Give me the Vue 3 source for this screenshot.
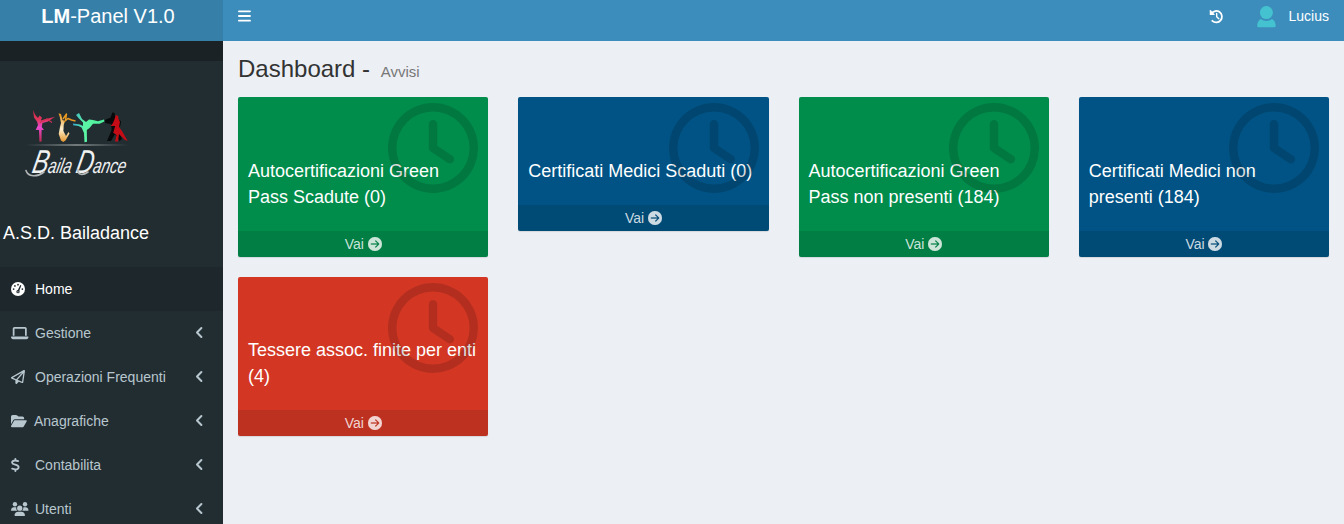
<script setup>
const menu = [
  { label: 'Home', icon: 'gauge', active: true },
  { label: 'Gestione', icon: 'laptop' },
  { label: 'Operazioni Frequenti', icon: 'plane' },
  { label: 'Anagrafiche', icon: 'folder' },
  { label: 'Contabilita', icon: 'dollar' },
  { label: 'Utenti', icon: 'users' }
]
const boxes = [
  { text: 'Autocertificazioni Green Pass Scadute (0)', tone: 'green' },
  { text: 'Certificati Medici Scaduti (0)', tone: 'blue' },
  { text: 'Autocertificazioni Green Pass non presenti (184)', tone: 'green' },
  { text: 'Certificati Medici non presenti (184)', tone: 'blue' },
  { text: 'Tessere assoc. finite per enti (4)', tone: 'red' }
]
</script>

<template>
  <div class="wrapper">
    <header class="header">
      <div class="brand"><span><b>LM</b>-Panel V1.0</span></div>
      <nav class="navbar">
        <svg class="bars" viewBox="0 0 14 14"><path d="M.9 2.3H12M.9 7H12M.9 11.7H12" fill="none" stroke="currentColor" stroke-width="1.8" stroke-linecap="round" /></svg>
        <div class="nav-right">
          <svg class="history" viewBox="0 0 16 16"><path d="M2.6 4.8A6.1 6.1 0 1 1 3.5 12.6" fill="none" stroke="currentColor" stroke-width="1.9" stroke-linecap="round" /><path d="M.8 1.5V5.8Q.8 6.4 1.4 6.4H5.7Q6.4 6.2 5.9 5.5L1.9 1.3Q1.1.7.8 1.5Z" fill="currentColor" /><path d="M8.2 4.7V8.2L10.5 10.4" fill="none" stroke="currentColor" stroke-width="1.5" stroke-linecap="round" stroke-linejoin="round" /></svg>
          <svg class="avatar" viewBox="0 0 20 22"><circle cx="9.4" cy="6.6" r="6.5" /><path d="M3.9 13C6.9 15.5 11.900 15.5 14.9 13C17.200 14.2 18.600 16.5 18.700 19.7Q18.700 21.2 17.100 21.2H1.700Q.2 21.2.2 19.7C.3 16.5 1.700 14.2 3.900 13Z" /></svg>
          <span class="user">Lucius</span>
        </div>
      </nav>
    </header>

    <div class="body">
      <aside class="sidebar">
        <div class="strip"></div>
        <div class="panel">
          <svg class="logo" viewBox="0 0 140 80">
            <defs>
              <linearGradient id="rose" x1="0" y1="0" x2="0" y2="1"><stop offset="0" stop-color="#c72845" /><stop offset=".3" stop-color="#e0355c" /><stop offset=".55" stop-color="#e84bd0" /><stop offset="1" stop-color="#b92c4c" /></linearGradient>
              <linearGradient id="gold" x1="0" y1="0" x2="0" y2="1"><stop offset="0" stop-color="#e38d12" /><stop offset=".55" stop-color="#fff0cf" /><stop offset="1" stop-color="#e5952b" /></linearGradient>
              <linearGradient id="mint" x1="0" y1="0" x2="1" y2="0"><stop offset="0" stop-color="#38a8cf" /><stop offset=".35" stop-color="#5cf5a5" /><stop offset="1" stop-color="#4bf09a" /></linearGradient>
              <linearGradient id="rule" x1="0" y1="0" x2="1" y2="0"><stop offset="0" stop-color="#8d9494" stop-opacity="0" /><stop offset=".5" stop-color="#8d9494" /><stop offset="1" stop-color="#8d9494" stop-opacity="0" /></linearGradient>
            </defs>
            <path fill="url(#rose)" d="M8 1L10.400 6L13 9L14.5 6.500L17 8.5L15.8 11.5L19 10.5L30 7.800L23 12.5L17.5 14L16.7 18L19 21L16.6 21L16.6 32.5L14.400 32.7L14 21L10.7 21L13 16L12 12.500L9 8.500Z" />
            <path fill="none" stroke="#cf3154" stroke-width="1.1" d="M15 13.500L22 10L27 13.500" />
            <path fill="url(#gold)" d="M33.5 4.3L36 5L37.5 11L40 12L38.7 16L38.4 22L41 27L43.5 23L44.5 24.5L40.5 31.5L38.2 33L36 31.5L33.7 25L35 18L36 14L34.8 8Z" />
            <path fill="none" stroke="#e89921" stroke-width="1.5" stroke-linejoin="round" d="M38.8 13L43 9.5L46.5 11L50.5 12M38 10L41.5 5L40.5 11" />
            <path fill="url(#mint)" d="M51 6L54 4L57 10L61 13L64 10.5L68 11L73 12.3L79 10.5L79.3 12.5L74.5 14.7L68 14.7L64.5 19L61.8 21L62 32.7L59.5 33.3L59 24L56.5 18.5L53.5 17L48 16.2L48.2 14.4L55 15.5L58 17L58 13.5L53.5 9Z" />
            <path fill="#07090a" d="M87.4 3.6Q90 2.8 89.8 6.3L91.5 9L96 12.3L95.5 16L93 20L97 30L94.5 32L90 25L86 32H82L86.7 21L86 15L80.3 14L80 11L85.6 8.5Z" />
            <path fill="#c30c15" d="M90.6 6.2Q94 6 93.2 9.3L95 13L94 18L97 22L102.7 32L100 31L94 25L93 32.5H90L91.5 26L88.2 23.7L90.2 17L85.7 17L88 14L89.6 10Z" />
            <path stroke="url(#rule)" stroke-width="1.4" d="M.5 36.01L103 35.99" />
            <text class="script" transform="translate(6 63.5) skewX(-12)" textLength="94" lengthAdjust="spacingAndGlyphs"><tspan class="cap">B</tspan>aila <tspan class="cap">D</tspan>ance</text>
            <path fill="none" stroke="#b4b8b8" stroke-width="1.6" stroke-linecap="round" d="M1 61.5C3 68 12 68.500 19 63M53 60.500C52.500 66.500 58 66.500 63 63" />
          </svg>
          <p class="club">A.S.D. Bailadance</p>
        </div>
        <ul class="menu">
          <li v-for="m in menu" :key="m.label" :class="{ active: m.active }">
            <span class="slot">
              <svg v-if="m.icon === 'gauge'" viewBox="0 0 512 512"><circle cx="256" cy="256" r="256" fill="currentColor" /><g class="cut"><circle cx="256" cy="96" r="32" /><circle cx="144" cy="144" r="32" /><circle cx="96" cy="256" r="32" /><circle cx="416" cy="256" r="32" /><circle cx="256" cy="352" r="60" /><path d="M235 330L335 116Q352 103 369 119Q377 130 371 143L285 364Z" /></g><circle cx="256" cy="360" r="22" fill="currentColor" /></svg>
              <svg v-else-if="m.icon === 'laptop'" viewBox="0 0 640 512"><path fill="currentColor" d="M128 32C92.7 32 64 60.7 64 96V352h64V96H512V352h64V96c0-35.3-28.7-64-64-64H128zM19.2 384C8.6 384 0 392.6 0 403.2C0 445.6 34.4 480 76.8 480H563.2c42.4 0 76.8-34.4 76.8-76.8c0-10.6-8.6-19.2-19.2-19.2H19.2z" /></svg>
              <svg v-else-if="m.icon === 'plane'" viewBox="0 0 512 512"><path fill="currentColor" d="M16.1 260.2c-22.6 12.9-20.5 47.3 3.6 57.3L160 376V479.3c0 18.1 14.6 32.7 32.7 32.7c9.7 0 18.9-4.3 25.1-11.8l62-74.3 123.9 51.6c18.9 7.9 40.8-4.5 43.9-24.7l64-416c1.9-12.1-3.4-24.3-13.5-31.2s-23.3-7.5-34-1.4l-448 256zm52.1 25.5L409.7 90.6 190.1 336l1.2 1L68.2 285.7zM403.3 425.4L236.7 355.9 450.8 116.6 403.3 425.4z" /></svg>
              <svg v-else-if="m.icon === 'folder'" viewBox="0 0 576 512"><path fill="currentColor" d="M88.7 223.8L0 375.8V96C0 60.7 28.7 32 64 32H181.5c17 0 33.3 6.7 45.3 18.7l26.5 26.5c12 12 28.3 18.7 45.3 18.7H416c35.3 0 64 28.7 64 64v32H144c-22.8 0-43.8 12.1-55.3 31.8zm27.6 16.1C122.1 230 132.6 224 144 224H544c11.5 0 22 6.1 27.7 16.1s5.7 22.2-.1 32.1l-112 192C453.9 474 443.4 480 432 480H32c-11.5 0-22-6.1-27.7-16.1s-5.7-22.2 .1-32.1l112-192z" /></svg>
              <svg v-else-if="m.icon === 'dollar'" viewBox="0 0 320 512"><path fill="none" stroke="currentColor" stroke-width="68" stroke-linecap="round" stroke-linejoin="round" d="M160 34V92M160 420V478M262 112C215 98 185 92 153 92C70 92 33 135 43 178C55 250 265 238 277 325C285 380 230 420 164 420C120 420 80 407 42 393" /></svg>
              <svg v-else viewBox="0 0 640 512"><g fill="currentColor"><circle cx="144" cy="80" r="80" /><circle cx="512" cy="80" r="80" /><circle cx="320" cy="224" r="96" /><path d="M0 298.7C0 239.8 47.8 192 106.7 192h42.7c16 0 31 3.5 44.6 9.7-10 41 1 87 41 118.3H21.3C9.6 320 0 310.4 0 298.7zM405 320c40-31 51-77 41-118.3 14-6.2 29-9.7 45-9.7h42.7C592.2 192 640 239.8 640 298.7c0 11.8-9.6 21.3-21.3 21.3zM128 485.3C128 411.7 187.7 352 261.3 352H378.7C452.3 352 512 411.7 512 485.3c0 14.7-11.9 26.7-26.7 26.7H154.7c-14.7 0-26.7-11.9-26.7-26.7z" /></g></svg>
            </span>
            <span class="label" :class="{ near: m.icon === 'folder' }">{{ m.label }}</span>
            <svg v-if="!m.active" class="angle" viewBox="0 0 8 14"><path d="M6.4 2L2 6.5L6.400 11" fill="none" stroke="currentColor" stroke-width="2" stroke-linecap="round" stroke-linejoin="round" /></svg>
          </li>
        </ul>
      </aside>

      <main class="content">
        <h1>Dashboard - <small>Avvisi</small></h1>
        <div class="grid">
          <section v-for="b in boxes" :key="b.text" class="box" :class="b.tone">
            <div class="inner"><p>{{ b.text }}</p></div>
            <svg class="clock" viewBox="0 0 512 512"><path d="M464 256A208 208 0 1 1 48 256a208 208 0 1 1 416 0zM0 256a256 256 0 1 0 512 0A256 256 0 1 0 0 256zM232 120V256c0 8 4 15.5 10.7 20l96 64c11 7.4 25.9 4.4 33.3-6.7s4.4-25.9-6.7-33.3L280 243.2V120c0-13.3-10.7-24-24-24s-24 10.7-24 24z" /></svg>
            <a class="more">Vai <svg viewBox="0 0 512 512"><path fill="currentColor" stroke="currentColor" stroke-width="8" d="M0 256a256 256 0 1 0 512 0A256 256 0 1 0 0 256z M297 385c-9.4 9.4-24.6 9.4-33.9 0s-9.4-24.6 0-33.9l71-71L120 280c-13.3 0-24-10.7-24-24s10.7-24 24-24l214.1 0-71-71c-9.4-9.4-9.4-24.6 0-33.9s24.6-9.4 33.9 0L409 239c9.4 9.4 9.4 24.6 0 33.9L297 385z" /></svg></a>
          </section>
        </div>
      </main>
    </div>
  </div>
</template>

<style>
body { margin: 0; overflow: hidden; }
</style>

<style scoped>
* { box-sizing: border-box; }
.wrapper { height: 524px; display: flex; flex-direction: column; overflow: hidden; font: 14px/20px "Liberation Sans", Arial, sans-serif; background: #ecf0f5; color: #333; }
.header { display: flex; height: 41px; flex: none; color: #fff; }
.brand { width: 223px; padding: 0 7px 9px 0; background: #367fa9; display: flex; align-items: center; justify-content: center; font-size: 20px; }
.navbar { flex: 1; background: #3c8dbc; display: flex; justify-content: space-between; align-items: center; padding: 0 15px 9px; }
.bars { width: 14px; height: 14px; }
.nav-right { display: flex; align-items: center; }
.history { width: 15px; height: 15px; margin-right: 33px; }
.avatar { width: 20px; height: 22px; margin: 1px 12px 0 0; fill: #44c2cf; }
.body { display: flex; flex: 1; min-height: 0; }
.sidebar { width: 223px; background: #222d32; flex: none; overflow: hidden; }
.strip { height: 20px; background: #1a2226; }
.panel { height: 206px; padding: 48px 0 0 3px; }
.logo { display: block; width: 140px; height: 80px; margin-left: 22px; overflow: visible; }
.script { fill: #f0f1f1; font: italic 21px "Liberation Sans", Arial, sans-serif; }
.cap { font-size: 33px; }
.club { margin: 31px 0 0; font-size: 18px; line-height: 26px; color: #fff; }
.menu { list-style: none; margin: 0; padding: 0; }
.menu li { height: 44px; display: flex; align-items: center; padding: 0 20px 0 11px; color: #b8c7ce; }
.menu li.active { background: #1e282c; color: #fff; }
.slot { width: 24px; height: 14px; display: flex; }
.slot svg { height: 14px; }
.cut { fill: #1e282c; }
.label { flex: 1; }
.near { margin-left: -1px; }
.angle { width: 8px; height: 14px; }
.content { flex: 1; padding: 15px 15px 0; }
h1 { margin: 0; height: 26px; font-size: 24px; font-weight: 400; line-height: 26px; }
small { font-size: 15px; color: #777; margin-left: 4px; }
.grid { display: grid; grid-template-columns: repeat(4, minmax(0, 1fr)); column-gap: 30px; row-gap: 20px; align-items: start; margin-top: 15.4px; }
.box { position: relative; border-radius: 2px; color: #fff; box-shadow: 0 1px 1px rgba(0, 0, 0, .1); overflow: hidden; }
.green { background: #008d4c; }
.blue { background: #005384; }
.red { background: #d33724; }
.inner { padding: 61.8px 10px 20px; }
.inner p { margin: 0; font-size: 18px; line-height: 25.7px; }
.clock { position: absolute; top: 6px; right: 10px; width: 90px; height: 90px; fill: rgba(0, 0, 0, .15); }
.more { position: relative; display: flex; align-items: center; justify-content: center; gap: 3.6px; height: 26px; background: rgba(0, 0, 0, .1); color: rgba(255, 255, 255, .8); }
.more svg { width: 14px; height: 14px; }
</style>
